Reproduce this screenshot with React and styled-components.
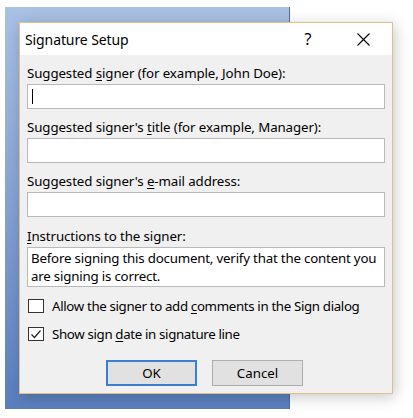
import React from "react";
import styled, { createGlobalStyle } from "styled-components";

const Global = createGlobalStyle`
  html, body { margin: 0; padding: 0; background: #ffffff; }
  body { font-family: "Noto Sans", "Open Sans", sans-serif; }
`;

const Desktop = styled.div`
  position: relative;
  width: 413px;
  height: 418px;
  overflow: hidden;
  background: #ffffff;
`;

const BackWindow = styled.div`
  position: absolute;
  left: 5px;
  top: 7px;
  width: 285px;
  height: 402px;
  background: linear-gradient(180deg, #a9c1e3 0%, #88a6d4 45%, #5a7fbe 100%);
  border-right: 1px solid #4f6fa6;
  box-sizing: border-box;
`;

const Dialog = styled.div`
  position: absolute;
  left: 19px;
  top: 22px;
  width: 374px;
  height: 372px;
  box-sizing: border-box;
  border: 1px solid #e2bf8a;
  background: #f0f0f0;
  box-shadow: 2px 3px 14px rgba(0, 0, 0, 0.22);
  display: flex;
  flex-direction: column;
  color: #000;
  font-family: "Noto Sans", "Open Sans", sans-serif;
  font-size: 13.3px;
`;

const TitleBar = styled.div`
  height: 32px;
  background: #ffffff;
  display: flex;
  align-items: center;
  padding-left: 5px;
  flex-shrink: 0;
`;

const Title = styled.div`
  flex: 1;
  font-size: 14px;
  letter-spacing: -0.1px;
`;

const TitleButton = styled.div`
  width: ${(p) => p.$w}px;
  height: 32px;
  display: flex;
  align-items: center;
  justify-content: center;
  font-size: 16px;
`;

const Body = styled.div`
  flex: 1;
  padding: 9px 7px 0 7px;
  display: flex;
  flex-direction: column;
`;

const Label = styled.div`
  height: 18px;
  line-height: 18px;
  margin-top: ${(p) => p.$mt || 0}px;
  margin-bottom: 2px;
  white-space: nowrap;
  letter-spacing: -0.1px;
`;

const U = styled.span`
  text-decoration: underline;
  text-underline-offset: 2px;
`;

const Input = styled.div`
  height: 25px;
  box-sizing: border-box;
  background: #ffffff;
  border: 1px solid #b9b9b9;
  display: flex;
  align-items: center;
  padding-left: 4px;
`;

const Caret = styled.div`
  width: 1px;
  height: 15px;
  background: #000;
`;

const TextArea = styled.div`
  height: 40px;
  box-sizing: border-box;
  background: #ffffff;
  border: 1px solid #b9b9b9;
  padding: 1px 2px 0 3px;
  line-height: 18px;
  letter-spacing: -0.2px;
  white-space: nowrap;
`;

const CheckRow = styled.div`
  display: flex;
  align-items: center;
  gap: 8px;
  height: 18px;
  margin-top: ${(p) => p.$mt}px;
  padding-left: 1px;
  white-space: nowrap;
  letter-spacing: -0.35px;
`;

const Box = styled.div`
  width: 16px;
  height: 14px;
  box-sizing: border-box;
  border: 1px solid #333;
  background: #fff;
  display: flex;
  align-items: center;
  justify-content: center;
  flex-shrink: 0;
`;

const Buttons = styled.div`
  display: flex;
  justify-content: center;
  gap: 15px;
  margin-top: 17px;
  padding-right: 3px;
`;

const Button = styled.div`
  width: 91px;
  height: 26px;
  box-sizing: border-box;
  background: #e1e1e1;
  border: ${(p) => (p.$primary ? "2px solid #3d7fcf" : "1px solid #adadad")};
  display: flex;
  align-items: center;
  justify-content: center;
`;

function CloseIcon() {
  return (
    <svg width="13" height="13" viewBox="0 0 13 13">
      <path d="M0.5 0.5 L12.5 12.5 M12.5 0.5 L0.5 12.5" stroke="#000" strokeWidth="1.1" />
    </svg>
  );
}

function Check() {
  return (
    <svg width="12" height="11" viewBox="0 0 12 11">
      <path d="M1.5 5.5 L4.5 8.5 L10.5 1.5" fill="none" stroke="#222" strokeWidth="1.2" />
    </svg>
  );
}

export default function App() {
  return (
    <>
      <Global />
      <Desktop>
        <BackWindow />
        <Dialog>
          <TitleBar>
            <Title>Signature Setup</Title>
            <TitleButton $w={52}>?</TitleButton>
            <TitleButton $w={58}>
              <CloseIcon />
            </TitleButton>
          </TitleBar>
          <Body>
            <Label>
              Suggested <U>s</U>igner (for example, John Doe):
            </Label>
            <Input>
              <Caret />
            </Input>
            <Label $mt={9}>
              Suggested signer's <U>t</U>itle (for example, Manager):
            </Label>
            <Input />
            <Label $mt={9}>
              Suggested signer's <U>e</U>-mail address:
            </Label>
            <Input />
            <Label $mt={10}>
              <U>I</U>nstructions to the signer:
            </Label>
            <TextArea>
              Before signing this document, verify that the content you
              <br />
              are signing is correct.
            </TextArea>
            <CheckRow $mt={10}>
              <Box />
              <span>
                Allow the signer to add <U>c</U>omments in the Sign dialog
              </span>
            </CheckRow>
            <CheckRow $mt={10}>
              <Box>
                <Check />
              </Box>
              <span>
                Show sign <U>d</U>ate in signature line
              </span>
            </CheckRow>
            <Buttons>
              <Button $primary>OK</Button>
              <Button>Cancel</Button>
            </Buttons>
          </Body>
        </Dialog>
      </Desktop>
    </>
  );
}
